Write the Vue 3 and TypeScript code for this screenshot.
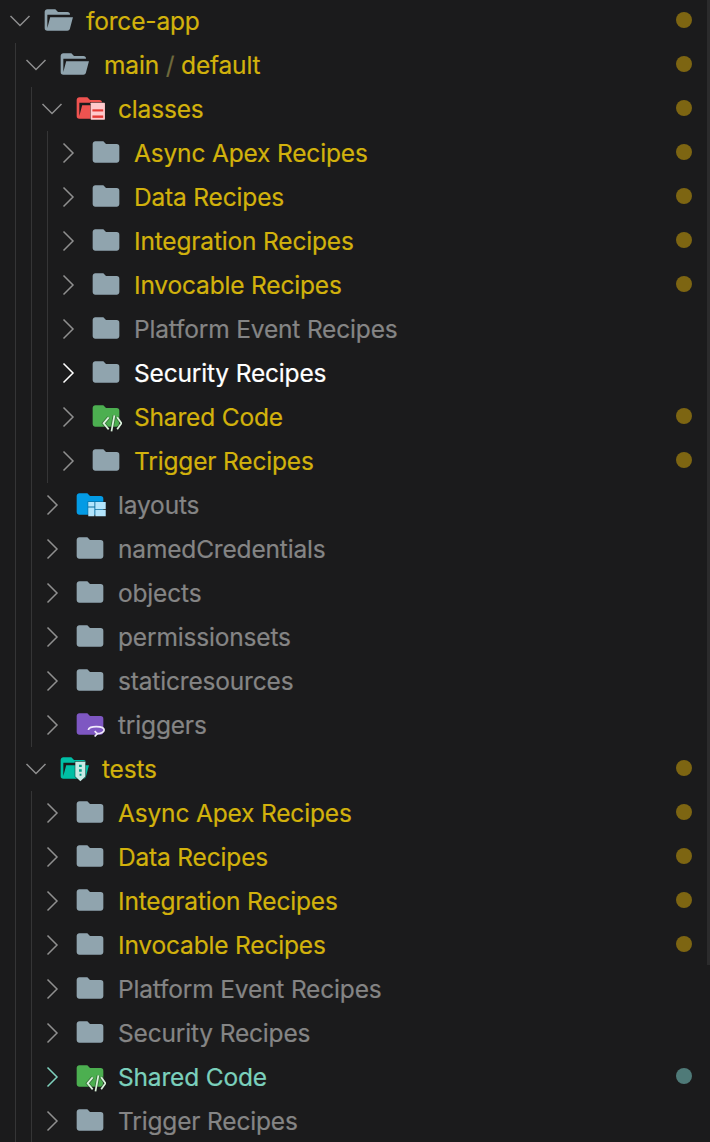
<script setup lang="ts">
type Tone = 'mod' | 'dim' | 'white' | 'new'
type Icon = 'closed' | 'open' | 'classes' | 'layouts' | 'shared' | 'triggers' | 'tests'
interface Row {
  level: number
  open?: boolean
  icon: Icon
  name: string
  suffix?: string
  tone: Tone
  dot?: boolean
  nudge?: boolean
}
const rows: Row[] = [
  { level: 0, open: true, icon: 'open', name: 'force-app', tone: 'mod', dot: true },
  { level: 1, open: true, icon: 'open', name: 'main', suffix: 'default', tone: 'mod', dot: true, nudge: true },
  { level: 2, open: true, icon: 'classes', name: 'classes', tone: 'mod', dot: true },
  { level: 3, icon: 'closed', name: 'Async Apex Recipes', tone: 'mod', dot: true },
  { level: 3, icon: 'closed', name: 'Data Recipes', tone: 'mod', dot: true },
  { level: 3, icon: 'closed', name: 'Integration Recipes', tone: 'mod', dot: true },
  { level: 3, icon: 'closed', name: 'Invocable Recipes', tone: 'mod', dot: true },
  { level: 3, icon: 'closed', name: 'Platform Event Recipes', tone: 'dim' },
  { level: 3, icon: 'closed', name: 'Security Recipes', tone: 'white' },
  { level: 3, icon: 'shared', name: 'Shared Code', tone: 'mod', dot: true },
  { level: 3, icon: 'closed', name: 'Trigger Recipes', tone: 'mod', dot: true },
  { level: 2, icon: 'layouts', name: 'layouts', tone: 'dim' },
  { level: 2, icon: 'closed', name: 'namedCredentials', tone: 'dim' },
  { level: 2, icon: 'closed', name: 'objects', tone: 'dim' },
  { level: 2, icon: 'closed', name: 'permissionsets', tone: 'dim' },
  { level: 2, icon: 'closed', name: 'staticresources', tone: 'dim' },
  { level: 2, icon: 'triggers', name: 'triggers', tone: 'dim' },
  { level: 1, open: true, icon: 'tests', name: 'tests', tone: 'mod', dot: true },
  { level: 2, icon: 'closed', name: 'Async Apex Recipes', tone: 'mod', dot: true },
  { level: 2, icon: 'closed', name: 'Data Recipes', tone: 'mod', dot: true },
  { level: 2, icon: 'closed', name: 'Integration Recipes', tone: 'mod', dot: true },
  { level: 2, icon: 'closed', name: 'Invocable Recipes', tone: 'mod', dot: true },
  { level: 2, icon: 'closed', name: 'Platform Event Recipes', tone: 'dim' },
  { level: 2, icon: 'closed', name: 'Security Recipes', tone: 'dim' },
  { level: 2, icon: 'shared', name: 'Shared Code', tone: 'new', dot: true },
  { level: 2, icon: 'closed', name: 'Trigger Recipes', tone: 'dim' },
]
const closedPath = 'M10 4H4c-1.11 0-2 .89-2 2v12c0 1.097.903 2 2 2h16c1.097 0 2-.903 2-2V8a2 2 0 0 0-2-2h-8l-2-2z'
const openPath = 'M19 20H4a2 2 0 0 1-2-2V6c0-1.11.89-2 2-2h6l2 2h7a2 2 0 0 1 2 2H4v10l2.14-8h17.07l-2.28 8.5c-.23.87-1.01 1.5-1.93 1.5z'
</script>

<template>
  <div class="tree">
    <div class="rows">
      <div v-for="(row, i) in rows" :key="i" class="row" :class="row.tone">
        <span v-for="n in row.level" :key="n" class="guide"></span>
        <svg class="chev" viewBox="0 0 24 24" width="24" height="24">
          <path v-if="row.open" d="M2.500 7 L12 16.500 L21.500 7" />
          <path v-else d="M7.500 2.500 L17 12 L7.500 21.500" />
        </svg>
        <svg class="icon" viewBox="0 0 24 24" width="32" height="32">
          <path v-if="row.icon === 'closed'" fill="#90a4ae" :d="closedPath" />
          <path v-else-if="row.icon === 'open'" fill="#90a4ae" :d="openPath" />
          <template v-else-if="row.icon === 'classes'">
            <path fill="#ef5350" :d="openPath" />
            <rect x="12" y="7.500" width="11.700" height="13.800" fill="#1b1b1c" opacity=".55" />
            <rect x="12.500" y="8" width="10.700" height="12.800" rx=".5" fill="#ffc9cc" />
            <rect x="13.800" y="13" width="8.100" height="1.600" fill="#e53935" />
            <rect x="13.800" y="17.600" width="8.100" height="1.800" fill="#e53935" />
          </template>
          <template v-else-if="row.icon === 'layouts'">
            <path fill="#039be5" :d="closedPath" />
            <rect x="10.200" y="10" width="14" height="11.700" fill="#1b1b1c" opacity=".35" />
            <path fill="#b3e5fc" d="M10.700 10.500h4.600v3.400h-4.600zM10.700 14.600h4.600v6.600h-4.600zM16 10.500h7.800v5.200H16zM16 16.400h7.800v4.800H16z" />
          </template>
          <template v-else-if="row.icon === 'shared'">
            <path fill="#4caf50" :d="closedPath" />
            <path class="code bold" stroke="#1b1b1c" opacity=".4" d="M14 13l-3.800 4.500 3.800 4.500M20.400 13l3.200 4.500-3.200 4.500M18.300 11.500l-2.200 12" />
            <path class="code" stroke="#dcf3dd" d="M14 13l-3.800 4.500 3.800 4.500M20.400 13l3.200 4.500-3.200 4.500M18.300 11.500l-2.200 12" />
          </template>
          <template v-else-if="row.icon === 'triggers'">
            <path fill="#7e57c2" :d="closedPath" />
            <path class="code" stroke="#efe9fb" d="M10.800 16.500c0-1.700 2.600-2.600 5.900-2.600s5.900.9 5.900 2.600-2.900 2.800-5.400 2.800" />
            <path class="code" stroke="#efe9fb" d="M15.500 17.300l1.900 2-1.900 2.100" />
          </template>
          <template v-else-if="row.icon === 'tests'">
            <path fill="#00bfa5" :d="openPath" />
            <path fill="#1b1b1c" opacity=".6" d="M12.500 6.800h8.500v11.700l-4.200 4.300-4.300-4.300z" />
            <path fill="#c8ebe6" d="M13 7.300h7.500v11l-3.700 3.700-3.800-3.700z" />
            <path fill="#009f8a" d="M15.800 9.500h2v1.800h-2zM15.800 13h2v1.800h-2zM16.200 16.300h1.400v1.500h-1.400z" />
          </template>
        </svg>
        <span class="label" :class="{ nudge: row.nudge }">{{ row.name }}<template v-if="row.suffix"><span class="sep"> / </span>{{ row.suffix }}</template></span>
        <span v-if="row.dot" class="dot"></span>
      </div>
    </div>
    <div class="scroll"></div>
  </div>
</template>

<style>
html, body { margin: 0; background: #1b1b1c; }
</style>

<style scoped>
.tree {
  width: 710px;
  height: 1142px;
  overflow: hidden;
  background: #1b1b1c;
  display: flex;
  font-family: Inter, "Noto Sans", sans-serif;
  font-size: 24.5px;
  letter-spacing: -0.17px;
  -webkit-text-stroke: 0.2px currentColor;
}
.rows {
  flex: 1;
  min-width: 0;
  margin-top: -1px;
}
.row {
  height: 44px;
  display: flex;
  align-items: stretch;
  padding-left: 15px;
  padding-right: 15px;
  white-space: nowrap;
}
.guide {
  width: 15px;
  flex: none;
  border-left: 1px solid #353536;
}
.chev {
  flex: none;
  align-self: center;
  margin-left: -7px;
  margin-right: -1px;
  fill: none;
  stroke: currentColor;
  stroke-width: 1.5;
  color: #8f8f8f;
}
.row.new .chev { color: #7fd1bd; }
.row.white .chev { color: #ffffff; }
.icon {
  flex: none;
  align-self: center;
  margin-left: 11px;
  margin-top: -2px;
  margin-right: 12px;
}
.code {
  fill: none;
  stroke-width: 1.3;
}
.code.bold {
  stroke-width: 2.6;
}
.label {
  align-self: center;
  flex: 1;
  line-height: 44px;
}
.nudge { margin-left: 2px; }
.sep { color: #6f6a3c; }
.mod .label { color: #d2b20c; }
.dim .label { color: #858585; }
.white .label { color: #ffffff; }
.new .label { color: #7bd0bc; }
.dot {
  flex: none;
  align-self: center;
  width: 16px;
  height: 16px;
  margin-top: -2px;
  border-radius: 50%;
  background: #7d6512;
}
.new .dot { background: #4f7a78; }
.scroll {
  flex: none;
  width: 3px;
  height: 965px;
  background: #2b2b2c;
}
</style>
